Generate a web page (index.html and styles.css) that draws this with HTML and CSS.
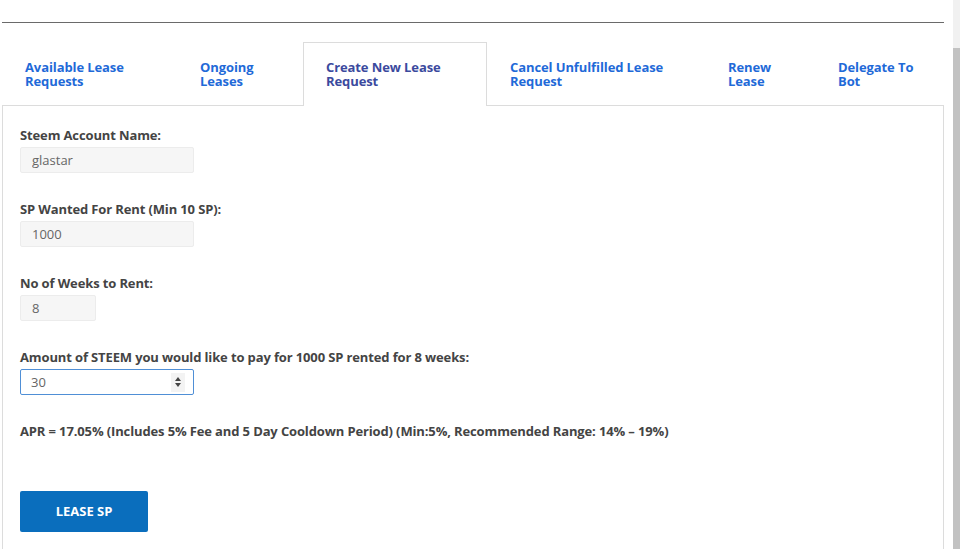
FILE: index.html
```html
<!DOCTYPE html>
<html lang="en">
<head>
    <meta charset="UTF-8">
    <title>Create New Lease Request</title>
    <link rel="stylesheet" href="styles.css">
</head>
<body>
    <div class="page">
        <div class="top-rule"></div>

        <ul class="tabs">
            <li class="tab tab-available"><a href="#">Available Lease Requests</a></li>
            <li class="tab tab-ongoing"><a href="#">Ongoing Leases</a></li>
            <li class="tab tab-create active"><a href="#">Create New Lease Request</a></li>
            <li class="tab tab-cancel"><a href="#">Cancel Unfulfilled Lease Request</a></li>
            <li class="tab tab-renew"><a href="#">Renew Lease</a></li>
            <li class="tab tab-delegate"><a href="#">Delegate To Bot</a></li>
        </ul>

        <div class="panel">
            <form id="leaseForm">
                <div class="form-group">
                    <label for="account">Steem Account Name:</label>
                    <input type="text" id="account" class="field" value="glastar" readonly>
                </div>
                <div class="form-group">
                    <label for="sp">SP Wanted For Rent (Min 10 SP):</label>
                    <input type="text" id="sp" class="field" value="1000" readonly>
                </div>
                <div class="form-group">
                    <label for="weeks">No of Weeks to Rent:</label>
                    <input type="text" id="weeks" class="field field-small" value="8" readonly>
                </div>
                <div class="form-group">
                    <label for="amount">Amount of STEEM you would like to pay for 1000 SP rented for 8 weeks:</label>
                    <div class="number-box">
                        <input type="text" id="amount" value="30">
                        <span class="spinner">
                            <svg width="8" height="14" viewBox="0 0 8 14">
                                <path d="M4 2 L7 6 L1 6 Z" fill="#444"/>
                                <path d="M1 8 L7 8 L4 12 Z" fill="#444"/>
                            </svg>
                        </span>
                    </div>
                </div>

                <p class="apr">APR = 17.05% (Includes 5% Fee and 5 Day Cooldown Period) (Min:5%, Recommended Range: 14% &ndash; 19%)</p>

                <button type="submit" class="button">LEASE SP</button>
            </form>
        </div>
    </div>

    <div class="scrollbar">
        <div class="scroll-track"></div>
        <div class="scroll-thumb"></div>
    </div>
</body>
</html>
```

FILE: styles.css
```css
body {
    font-family: "Open Sans", "Noto Sans", Arial, sans-serif;
    font-size: 13px;
    color: #444;
    background-color: #ffffff;
    margin: 0;
    padding: 0;
    display: flex;
    height: 549px;
    overflow: hidden;
}

.page {
    width: 942px;
    margin-left: 2px;
}

.top-rule {
    height: 22px;
    border-bottom: 1px solid #6a6a6a;
    margin-bottom: 19px;
}

/* tabs */

.tabs {
    list-style: none;
    margin: 0;
    padding: 0;
    display: flex;
    border-bottom: 1px solid #dcdcdc;
}

.tab {
    height: 64px;
    margin-bottom: -1px;
    display: flex;
    align-items: center;
    padding-left: 22px;
    padding-bottom: 1px;
    box-sizing: border-box;
    border: 1px solid transparent;
    border-bottom: none;
}

.tab a {
    color: #1f6ad8;
    font-weight: bold;
    line-height: 14px;
    letter-spacing: -0.1px;
    text-decoration: none;
    padding-bottom: 1px;
}

.tab.active {
    border-color: #dcdcdc;
    background-color: #ffffff;
}

.tab.active a {
    color: #3b4a9e;
}

.tab-available { width: 175px; padding-right: 40px; }
.tab-ongoing { width: 126px; padding-right: 40px; }
.tab-create { width: 184px; padding-right: 30px; }
.tab-cancel { width: 218px; padding-right: 30px; }
.tab-renew { width: 110px; padding-right: 40px; }
.tab-delegate { width: 129px; padding-right: 12px; }

/* panel */

.panel {
    border: 1px solid #dcdcdc;
    border-top: none;
    padding: 20px 17px 40px;
    min-height: 420px;
}

.form-group {
    margin-bottom: 27px;
}

.form-group label {
    display: block;
    font-weight: bold;
    line-height: 18px;
    letter-spacing: -0.13px;
    margin-bottom: 3px;
    color: #444;
}

.field {
    display: block;
    width: 174px;
    height: 26px;
    box-sizing: border-box;
    padding: 0 11px;
    border: 1px solid #ececec;
    border-radius: 2px;
    background-color: #f6f6f6;
    font-family: inherit;
    font-size: 13px;
    color: #666;
    outline: none;
}

.field-small {
    width: 76px;
}

.number-box {
    display: flex;
    align-items: center;
    width: 174px;
    height: 26px;
    box-sizing: border-box;
    border: 1px solid #4f8fd6;
    border-radius: 2px;
    background-color: #ffffff;
}

.number-box input {
    flex: 1;
    min-width: 0;
    border: none;
    outline: none;
    padding: 0 0 0 10px;
    font-family: inherit;
    font-size: 13px;
    color: #666;
    background: transparent;
}

.spinner {
    display: flex;
    align-items: center;
    justify-content: center;
    width: 14px;
    height: 19px;
    margin-right: 8px;
    background-color: #f3f3f3;
}

.apr {
    font-weight: bold;
    line-height: 18px;
    letter-spacing: -0.13px;
    margin: 0 0 51px;
}

.button {
    width: 128px;
    height: 41px;
    padding: 0 0 1px;
    background-color: #0a6ebd;
    color: #ffffff;
    border: none;
    border-radius: 2px;
    font-family: inherit;
    font-size: 13px;
    font-weight: bold;
    cursor: pointer;
}

.button:hover {
    background-color: #085a9c;
}

/* fake window scrollbar */

.scrollbar {
    margin-left: auto;
    width: 7px;
    display: flex;
    flex-direction: column;
}

.scroll-track {
    height: 48px;
    background-color: #f1f1f1;
}

.scroll-thumb {
    flex: 1;
    background-color: #c2c2c2;
}
```
